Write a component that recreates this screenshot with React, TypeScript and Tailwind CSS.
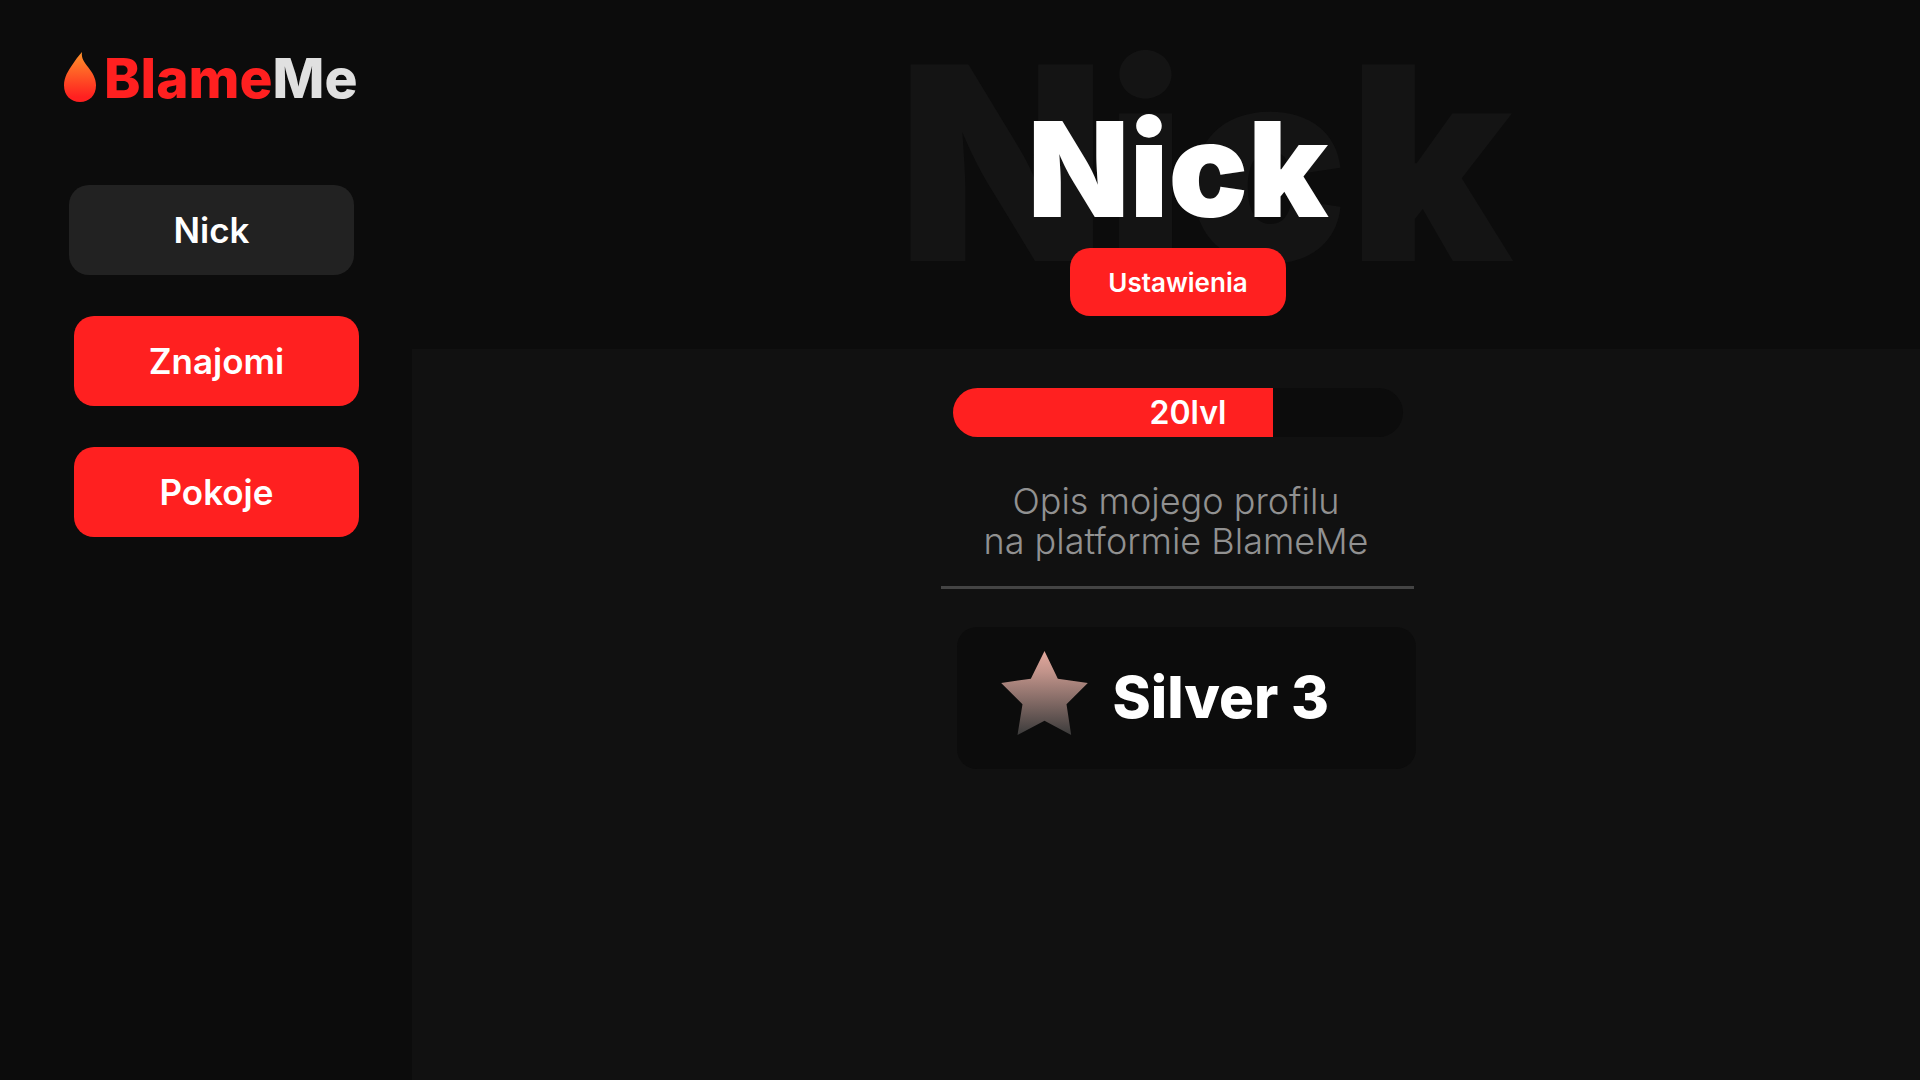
function FlameLogo() {
  return (
    <svg viewBox="0 0 96 150" className="h-[50px] w-8" aria-hidden="true">
      <defs>
        <linearGradient id="flame" x1="0" y1="0" x2="0" y2="1">
          <stop offset="0.05" stopColor="#ff8c2a" />
          <stop offset="0.9" stopColor="#ff2020" />
        </linearGradient>
      </defs>
      <path
        fill="url(#flame)"
        d="M54 0C42 13 34 25 25 38C13 56 0 74 0 100C0 131 20 150 48 150C76 150 96 131 96 100C96 78 84 60 72 45C61 31 51 18 54 0Z"
      />
    </svg>
  );
}

function RankStar() {
  return (
    <svg viewBox="0 0 260 252" className="h-[84px] w-[87px]" aria-hidden="true">
      <defs>
        <linearGradient id="rank" x1="0" y1="0" x2="0" y2="1">
          <stop offset="0" stopColor="#e3a89d" />
          <stop offset="0.25" stopColor="#c1938a" />
          <stop offset="1" stopColor="#3b3b3b" />
        </linearGradient>
      </defs>
      <path
        fill="url(#rank)"
        d="M130 0L170 83L260 96L196 160L210 252L130 209L49 252L64 160L0 96L89 83Z"
      />
    </svg>
  );
}

const links = ["Znajomi", "Pokoje"];

export default function App() {
  const progress = 71;
  return (
    <div className="flex min-h-screen bg-[#0c0c0c] font-['Inter',sans-serif] text-white">
      <aside className="w-[412px] shrink-0 pt-[52px] pr-[53px] pl-16">
        <a href="#" className="flex h-[50px] items-center gap-2">
          <FlameLogo />
          <span className="pt-0.5 text-[55px] leading-[50px] font-extrabold text-[#ff2020]">
            Blame<span className="text-[#e0e0e0]">Me</span>
          </span>
        </a>
        <nav className="mt-[83px] ml-[5px] flex flex-col items-end gap-[41px]">
          <button className="h-[90px] w-[285px] self-start rounded-[20px] bg-[#222222] text-[35px] font-semibold">
            Nick
          </button>
          {links.map((label) => (
            <button
              key={label}
              className="h-[90px] w-[285px] rounded-[20px] bg-[#ff2020] text-[35px] font-semibold"
            >
              {label}
            </button>
          ))}
        </nav>
      </aside>

      <div className="flex grow flex-col">
        <header className="relative flex h-[349px] flex-col items-center pt-[90px] pl-6">
          <span
            aria-hidden="true"
            className="absolute inset-x-0 top-0 pl-[78px] text-center text-[270px] leading-[326px] font-black text-[#141414]"
          >
            Nick
          </span>
          <h1 className="relative text-[132px] leading-[158px] font-black">Nick</h1>
          <button className="relative h-[68px] w-[216px] rounded-[20px] bg-[#ff2020] text-[26px] font-semibold">
            Ustawienia
          </button>
        </header>

        <main className="flex grow flex-col items-center bg-[#111111] pt-[39px] pl-6">
          <div
            role="progressbar"
            aria-label="Poziom"
            aria-valuenow={progress}
            className="relative h-[49px] w-[450px] overflow-hidden rounded-full bg-[#0c0c0c]"
          >
            <div className="h-full bg-[#ff2020]" style={{ width: `${progress}%` }} />
            <span className="absolute inset-0 pl-5 text-center text-[32px] leading-[49px] font-semibold">
              20lvl
            </span>
          </div>

          <section className="mt-11 flex w-[475px] flex-col">
            <p className="pr-1 text-center text-[36px] leading-10 font-light text-[#919191]">
              Opis mojego profilu
              <br />
              na platformie BlameMe
            </p>
            <hr className="mt-[25px] h-[3px] w-[473px] border-0 bg-[#444444]" />
            <div className="mt-[38px] flex h-[142px] w-[459px] items-center gap-[25px] self-end rounded-[20px] bg-[#0c0c0c] pb-2.5 pl-11">
              <RankStar />
              <h2 className="pt-2 text-[58px] leading-[70px] font-extrabold">Silver 3</h2>
            </div>
          </section>
        </main>
      </div>
    </div>
  );
}
